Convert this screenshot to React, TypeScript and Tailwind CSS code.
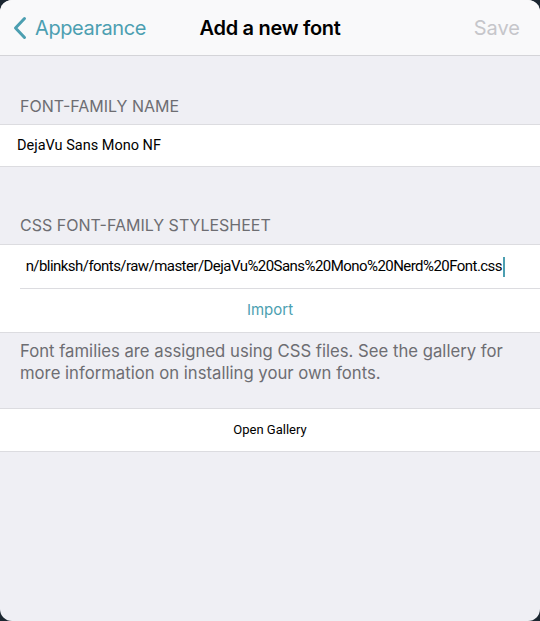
import React from "react";

export default function App() {
  return (
    <div className="w-[540px] h-[621px] bg-[#1b2630] overflow-hidden" style={{ fontFamily: "Inter, 'Noto Sans', sans-serif" }}>
      <div className="w-full h-full bg-[#efeff4] rounded-[12px] overflow-hidden flex flex-col">
        {/* Nav bar */}
        <div className="h-[56px] shrink-0 bg-[#f9f9fa] border-b border-[#d4d4d8] flex items-center relative">
          <div className="flex items-center pl-[13px] text-[#4c9fb1]">
            <svg width="14" height="24" viewBox="0 0 14 24" fill="none">
              <path d="M11.5 2.5 L2.5 12 L11.5 21.5" stroke="#4c9fb1" strokeWidth="3" strokeLinecap="round" strokeLinejoin="round" />
            </svg>
            <span className="ml-[8px] text-[20px] tracking-[-0.4px]">Appearance</span>
          </div>
          <div className="absolute left-0 right-0 top-0 h-full flex items-center justify-center pointer-events-none">
            <span className="text-[20px] font-semibold text-black tracking-[-0.3px]">Add a new font</span>
          </div>
          <span className="ml-auto pr-[20px] text-[20px] text-[#c6c6ca]">Save</span>
        </div>

        {/* Section 1 */}
        <div className="pt-[40px] pb-[8px] px-[20px] text-[16px] text-[#6d6d72] leading-[20px]">FONT-FAMILY NAME</div>
        <div className="h-[43px] bg-white border-y border-[#dcdce0] flex items-center pl-[17px] text-[14.5px] text-black" style={{ fontFamily: "Roboto, sans-serif" }}>
          DejaVu Sans Mono NF
        </div>

        {/* Section 2 */}
        <div className="pt-[48px] pb-[9px] px-[20px] text-[16px] text-[#6d6d72] leading-[20px]">CSS FONT-FAMILY STYLESHEET</div>
        <div className="bg-white border-y border-[#dcdce0]">
          <div className="ml-[20px] h-[44px] border-b border-[#dcdce0] flex items-center justify-end pr-[35px] text-[15px] text-black whitespace-nowrap overflow-hidden" style={{ fontFamily: "Roboto, sans-serif" }}>
            <span className="shrink-0 tracking-[-0.55px]">n/blinksh/fonts/raw/master/DejaVu%20Sans%20Mono%20Nerd%20Font.css</span>
            <span className="shrink-0 inline-block w-[2px] h-[20px] bg-[#4c9fb1] ml-[1px]" />
          </div>
          <div className="h-[43px] flex items-center justify-center text-[15px] text-[#4c9fb1]">Import</div>
        </div>
        <div className="pt-[7px] px-[20px] text-[16.7px] leading-[22px] text-[#6d6d72] h-[75px]">
          Font families are assigned using CSS files. See the gallery for more information on installing your own fonts.
        </div>

        {/* Section 3 */}
        <div className="h-[44px] bg-white border-y border-[#dcdce0] flex items-center justify-center text-[13px] text-black" style={{ fontFamily: "Roboto, sans-serif" }}>
          Open Gallery
        </div>
      </div>
    </div>
  );
}
